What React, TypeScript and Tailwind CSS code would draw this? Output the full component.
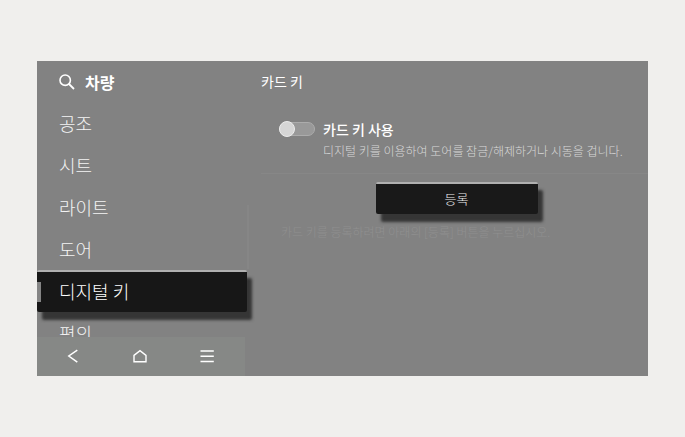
import { useState } from "react";

const menuItems = ["공조", "시트", "라이트", "도어", "디지털 키", "편의"];

const SearchIcon = () => (
  <svg className="h-4 w-4 shrink-0" viewBox="0 0 16 16" fill="none" stroke="currentColor" aria-hidden="true">
    <circle cx="6.2" cy="6.2" r="5.2" strokeWidth="1.6" />
    <path d="M10 10l5 5" strokeWidth="1.8" />
  </svg>
);

const BackIcon = () => (
  <svg className="h-4 w-4" viewBox="0 0 16 16" fill="none" stroke="currentColor" strokeWidth="1.5" aria-hidden="true">
    <path d="M12.3 2.2L3.8 8l8.5 6.2" />
  </svg>
);

const HomeIcon = () => (
  <svg className="h-4 w-4" viewBox="0 0 16 16" fill="none" stroke="currentColor" strokeWidth="1.4" aria-hidden="true">
    <path d="M2 7.4L8 2.6l6 4.8v6.3H2z" />
  </svg>
);

const MenuIcon = () => (
  <svg className="h-4 w-4" viewBox="0 0 16 16" fill="none" stroke="currentColor" strokeWidth="1.5" aria-hidden="true">
    <path d="M1.5 3h13.3M1.5 8.3h13.3M1.5 13.5h13.3" />
  </svg>
);

const Sidebar = ({ active, onSelect }: { active: string; onSelect: (item: string) => void }) => (
  <aside className="relative flex w-[210px] shrink-0 flex-col">
    <button type="button" className="flex h-[41px] items-center gap-2.5 pl-[22px] text-base font-bold text-white">
      <SearchIcon />
      차량
    </button>

    {/* wider than the column so the active row's shadow is not cut off */}
    <ul className="h-[235px] w-[220px] overflow-hidden pr-2.5 text-lg font-light text-[#f4f4f4]">
      {menuItems.map((item) => {
        const isActive = item === active;
        return (
          <li key={item} className="h-[42px]">
            <button
              type="button"
              onClick={() => onSelect(item)}
              className={`relative flex h-full w-full items-center pl-[22px] text-left ${
                isActive
                  ? "rounded-xs border-t-2 border-[#b0b0b0] bg-[#171717] pb-0.5 text-white shadow-[5px_8px_3px_#353535]"
                  : ""
              }`}
            >
              {isActive && <span className="absolute left-0 top-2.5 h-5 w-1 bg-[#858585]" aria-hidden="true" />}
              {item}
            </button>
          </li>
        );
      })}
    </ul>
    <span className="absolute -right-0.5 top-36 h-16 w-0.5 bg-[#868686]" aria-hidden="true" />

    <nav className="mr-0.5 flex h-[39px] items-center justify-between bg-[#868886] pb-0.5 pl-7 pr-[30px] text-white">
      <button type="button" aria-label="뒤로">
        <BackIcon />
      </button>
      <button type="button" aria-label="홈">
        <HomeIcon />
      </button>
      <button type="button" aria-label="메뉴">
        <MenuIcon />
      </button>
    </nav>
  </aside>
);

const App = () => {
  const [active, setActive] = useState("디지털 키");
  const [enabled, setEnabled] = useState(false);

  return (
    <div className="min-h-screen bg-[#f0efed] px-[37px] py-[61px] font-['Noto_Sans_CJK_KR',sans-serif]">
      <div className="flex overflow-hidden bg-[#828282]">
        <Sidebar active={active} onSelect={setActive} />

        <main className="min-w-0 flex-1 pl-3.5">
          <h1 className="flex h-10 items-center text-sm text-white">카드 키</h1>

          {/* Toggle */}
          <section className="flex items-start gap-2 border-b border-[#878787] pb-3 pl-[18px] pt-4">
            <label className="relative mt-1 flex h-4 w-9 shrink-0 items-center">
              <input
                type="checkbox"
                role="switch"
                aria-labelledby="card-key-label"
                checked={enabled}
                onChange={(e) => setEnabled(e.target.checked)}
                className="peer h-3.5 w-full appearance-none rounded-full border border-[#acacac] bg-[#999999]"
              />
              <span className="pointer-events-none absolute left-0 h-4 w-4 rounded-full border border-[#ececec] bg-[#d6d6d6] peer-checked:left-5" />
            </label>
            <div className="min-w-0">
              <h2 id="card-key-label" className="text-sm/6 font-medium text-white">
                카드 키 사용
              </h2>
              <p className="text-xs/5 font-light text-[#d8d8d8]">
                디지털 키를 이용하여 도어를 잠금/해제하거나 시동을 겁니다.
              </p>
            </div>
          </section>

          {/* Registration */}
          <section className="pt-2">
            <div className="flex justify-center pl-1">
              <button
                type="button"
                className="h-8 w-[162px] rounded-xs border-t-2 border-[#b0b0b0] bg-[#191919] text-[13px] font-light text-[#f0f0f0] shadow-[5px_8px_3px_#353535]"
              >
                등록
              </button>
            </div>
            <p className="pl-5 pt-2 text-xs/5 font-light text-[#909090]">
              카드 키를 등록하려면 아래의 [등록] 버튼을 누르십시오.
            </p>
          </section>
        </main>
      </div>
    </div>
  );
};

export default App;
